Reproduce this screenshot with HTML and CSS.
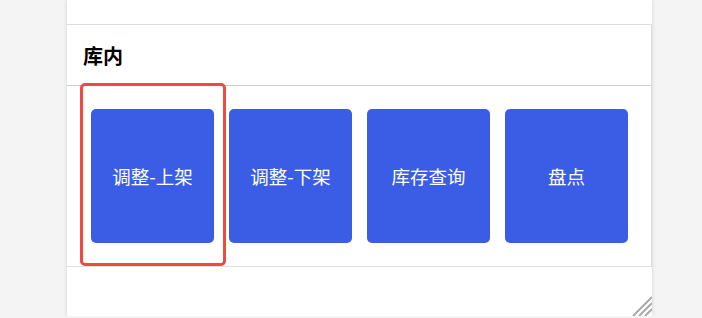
FILE: index.html
```html
<!DOCTYPE html>
<html lang="zh-CN">
<head>
<meta charset="utf-8">
<title>库内</title>
<link rel="stylesheet" href="styles.css">
</head>
<body>
<div class="panel">
  <div class="top"></div>
  <div class="card">
    <div class="card-header">库内</div>
    <div class="card-body">
      <div class="btn">调整-上架</div>
      <div class="btn">调整-下架</div>
      <div class="btn">库存查询</div>
      <div class="btn">盘点</div>
    </div>
    <div class="highlight"></div>
  </div>
  <div class="bottom">
    <svg class="grip" width="20" height="20" viewBox="0 0 20 20">
      <path d="M20 1 L1 20 M20 7 L7 20 M20 13 L13 20" stroke="#a9a9a9" stroke-width="2" fill="none"/>
    </svg>
  </div>
</div>
</body>
</html>
```
FILE: styles.css
```css
html, body {
  margin: 0;
  padding: 0;
  background: #f4f4f4;
  font-family: "Noto Sans CJK SC", "Noto Sans", sans-serif;
}
.panel {
  margin-left: 67px;
  width: 585px;
  background: #fff;
  box-shadow: 0 0 4px rgba(0,0,0,0.14);
}
.top {
  height: 24px;
  border-bottom: 1px solid #dedede;
}
.card {
  position: relative;
  border-right: 1px solid #dedede;
}
.card-header {
  height: 61px;
  box-sizing: border-box;
  border-bottom: 1px solid #cccccc;
  padding-left: 16px;
  display: flex;
  align-items: center;
  font-size: 20px;
  font-weight: bold;
  color: #000;
}
.card-body {
  display: grid;
  grid-template-columns: repeat(4, 123px);
  gap: 15px;
  padding: 23px 24px;
  border-bottom: 1px solid #dedede;
}
.btn {
  height: 134px;
  background: #3b5de6;
  border-radius: 5px;
  color: #fff;
  font-size: 18.5px;
  display: flex;
  align-items: center;
  justify-content: center;
}
.highlight {
  position: absolute;
  left: 13px;
  top: 58px;
  width: 146px;
  height: 183px;
  box-sizing: border-box;
  border: 3px solid #f04a3e;
  border-radius: 5px;
}
.bottom {
  position: relative;
  height: 49px;
}
.grip {
  position: absolute;
  right: 0;
  bottom: 0;
  display: block;
}
```
